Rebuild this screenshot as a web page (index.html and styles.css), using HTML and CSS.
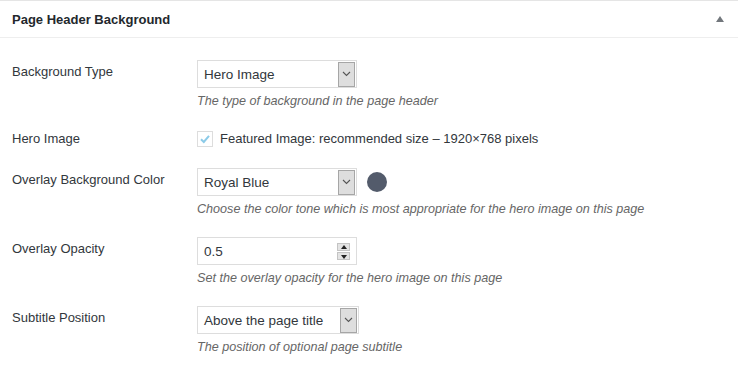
FILE: index.html
```html
<!DOCTYPE html>
<html lang="en">

<head>
    <meta charset="UTF-8" />
    <meta name="viewport" content="width=device-width, initial-scale=1.0" />
    <title>Page Header Background</title>
    <link rel="stylesheet" href="styles.css">
</head>

<body>
    <div class="postbox">
        <div class="postbox-header">
            <h2>Page Header Background</h2>
            <span class="toggle-arrow"></span>
        </div>

        <div class="inside">
            <div class="field-row first">
                <div class="field-label">Background Type</div>
                <div class="field-body">
                    <div class="select">
                        <span class="select-value">Hero Image</span>
                        <span class="select-btn">
                            <svg width="9" height="6" viewBox="0 0 9 6"><path d="M1 1 L4.5 4.5 L8 1" fill="none" stroke="#555" stroke-width="1.1"/></svg>
                        </span>
                    </div>
                    <p class="description">The type of background in the page header</p>
                </div>
            </div>

            <div class="field-row">
                <div class="field-label flat">Hero Image</div>
                <div class="field-body">
                    <label class="check">
                        <span class="checkbox">
                            <svg width="14" height="14" viewBox="0 0 14 14"><path d="M3 7.2 L5.8 10 L11 3.8" fill="none" stroke="#8ccbe8" stroke-width="2"/></svg>
                        </span>
                        Featured Image: recommended size – 1920×768 pixels
                    </label>
                </div>
            </div>

            <div class="field-row">
                <div class="field-label">Overlay Background Color</div>
                <div class="field-body">
                    <div class="inline">
                        <div class="select">
                            <span class="select-value">Royal Blue</span>
                            <span class="select-btn">
                                <svg width="9" height="6" viewBox="0 0 9 6"><path d="M1 1 L4.5 4.5 L8 1" fill="none" stroke="#555" stroke-width="1.1"/></svg>
                            </span>
                        </div>
                        <span class="swatch"></span>
                    </div>
                    <p class="description">Choose the color tone which is most appropriate for the hero image on this page</p>
                </div>
            </div>

            <div class="field-row">
                <div class="field-label">Overlay Opacity</div>
                <div class="field-body">
                    <div class="number">
                        <span class="select-value">0.5</span>
                        <span class="spinner">
                            <span class="spin up"></span>
                            <span class="spin down"></span>
                        </span>
                    </div>
                    <p class="description">Set the overlay opacity for the hero image on this page</p>
                </div>
            </div>

            <div class="field-row">
                <div class="field-label">Subtitle Position</div>
                <div class="field-body">
                    <div class="select wide">
                        <span class="select-value">Above the page title</span>
                        <span class="select-btn">
                            <svg width="9" height="6" viewBox="0 0 9 6"><path d="M1 1 L4.5 4.5 L8 1" fill="none" stroke="#555" stroke-width="1.1"/></svg>
                        </span>
                    </div>
                    <p class="description">The position of optional page subtitle</p>
                </div>
            </div>
        </div>
    </div>
</body>

</html>
```

FILE: styles.css
```css
body,
html {
    margin: 0;
    padding: 0;
    background-color: #fff;
    font-family: "Liberation Sans", Arial, sans-serif;
    font-size: 13px;
    color: #32373c;
}

.postbox {
    border-top: 1px solid #e5e5e5;
}

.postbox-header {
    display: flex;
    align-items: center;
    justify-content: space-between;
    height: 36px;
    padding: 0 14px 0 12px;
    border-bottom: 1px solid #eee;
}

.postbox-header h2 {
    margin: 0;
    font-size: 13px;
    font-weight: bold;
    color: #23282d;
}

.toggle-arrow {
    width: 0;
    height: 0;
    border-left: 4px solid transparent;
    border-right: 4px solid transparent;
    border-bottom: 6px solid #72777c;
}

.inside {
    padding: 0 12px;
}

.field-row {
    display: flex;
    padding-top: 19px;
}

.field-row.first {
    padding-top: 22px;
}

.field-label {
    width: 185px;
    flex-shrink: 0;
    padding-top: 2px;
    line-height: 20px;
}

.field-label.flat {
    padding-top: 0;
}

.field-body {
    flex-grow: 1;
}

.select,
.number {
    position: relative;
    display: flex;
    align-items: center;
    width: 158px;
    height: 26px;
    border: 1px solid #ddd;
    background-color: #fff;
    color: #32373c;
    font-size: 13.5px;
}

.select.wide {
    width: 160px;
}

.select-value {
    padding-left: 6px;
    flex-grow: 1;
}

.select-btn {
    display: flex;
    align-items: center;
    justify-content: center;
    width: 15px;
    height: 23px;
    margin-right: 1px;
    background-color: #dedede;
    border: 1px solid #a6a6a6;
}

.inline {
    display: flex;
    align-items: center;
    gap: 10px;
}

.swatch {
    width: 20px;
    height: 20px;
    border-radius: 50%;
    background-color: #535b6b;
}

.spinner {
    display: flex;
    flex-direction: column;
    gap: 1px;
    margin-right: 6px;
}

.spin {
    position: relative;
    width: 13px;
    height: 8px;
    background-color: #e4e4e4;
    border: 1px solid #c4c4c4;
    box-sizing: border-box;
}

.spin::after {
    content: "";
    position: absolute;
    left: 3px;
    width: 0;
    height: 0;
    border-left: 3px solid transparent;
    border-right: 3px solid transparent;
}

.spin.up::after {
    top: 1px;
    border-bottom: 4px solid #222;
}

.spin.down::after {
    top: 2px;
    border-top: 4px solid #222;
}

.check {
    display: flex;
    align-items: center;
    gap: 7px;
    line-height: 20px;
}

.checkbox {
    display: flex;
    align-items: center;
    justify-content: center;
    width: 14px;
    height: 14px;
    border: 1px solid #ddd;
    background-color: #fff;
}

.description {
    margin: 4px 0 0;
    font-size: 12.6px;
    font-style: italic;
    line-height: 18px;
    color: #666;
}
```
